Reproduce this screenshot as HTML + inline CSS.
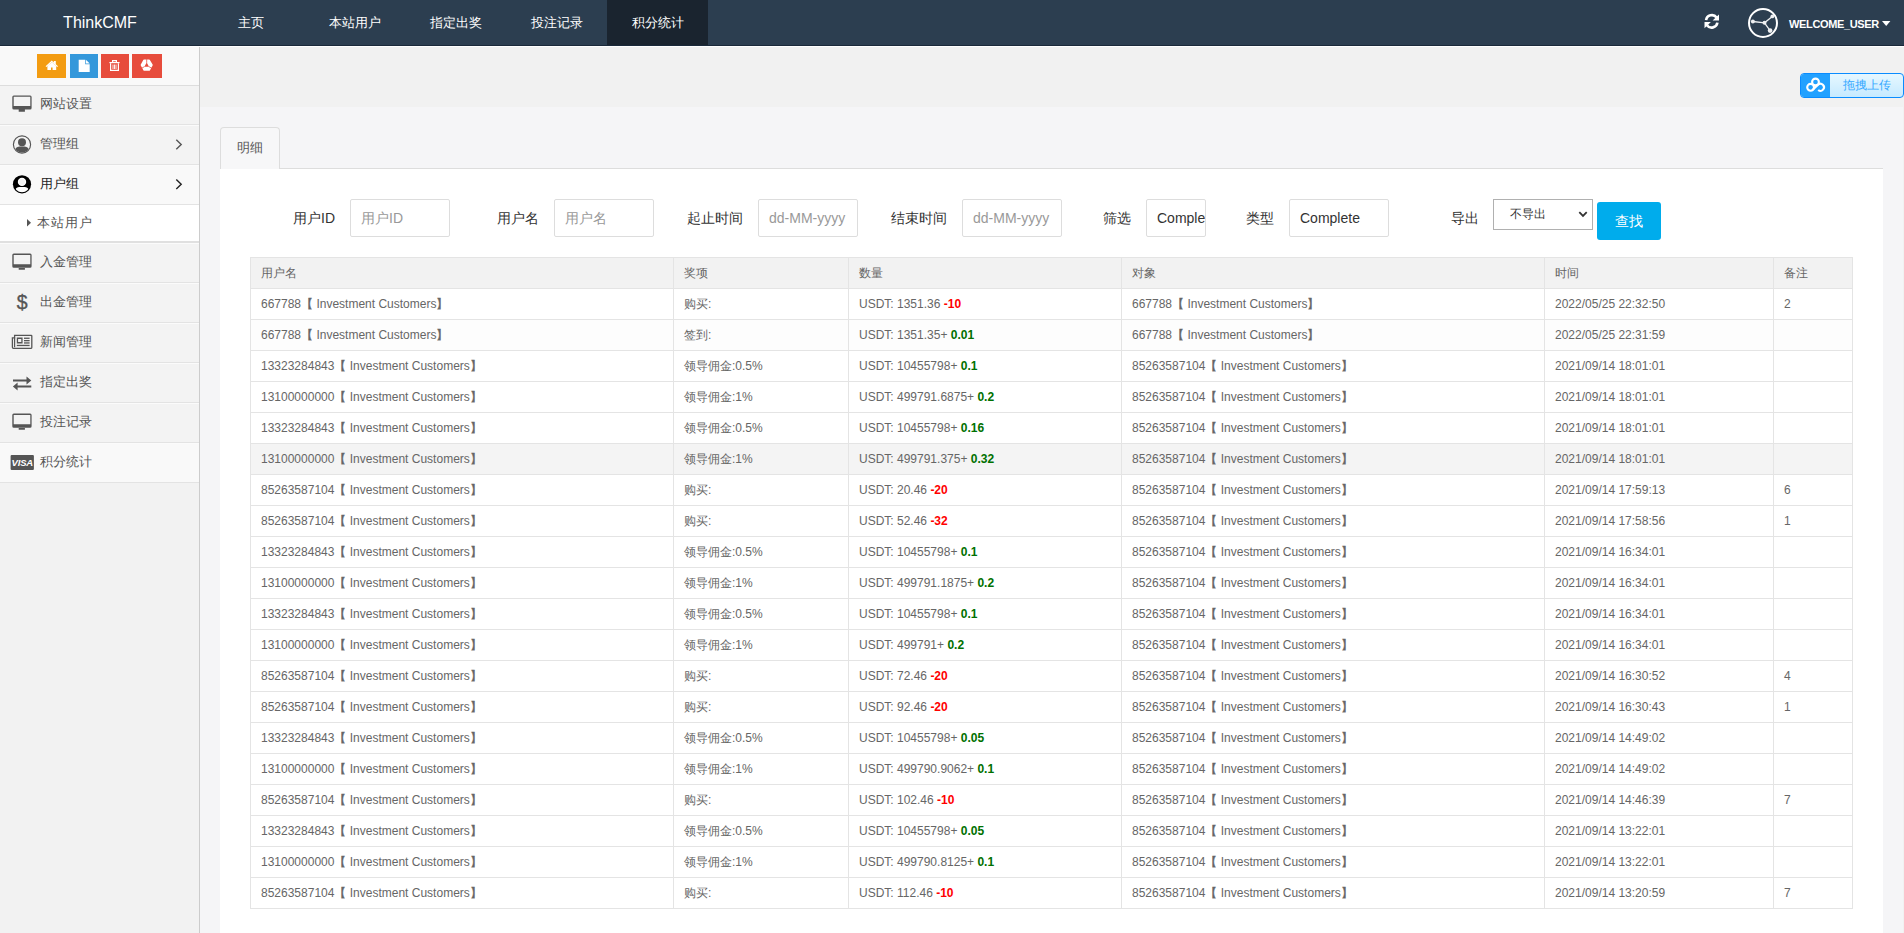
<!DOCTYPE html>
<html><head><meta charset="utf-8">
<style>
*{margin:0;padding:0;box-sizing:border-box}
html,body{width:1904px;height:933px;overflow:hidden}
body{font-family:"Liberation Sans",sans-serif;font-size:12px;color:#666;background:#f5f5f7;position:relative}
.abs{position:absolute}
#nav{left:0;top:0;width:1904px;height:46px;background:#2c3e50}
#navb{left:0;top:45px;width:1904px;height:1px;background:rgba(5,15,30,0.45)}
#nav .brand{left:0;top:0;width:200px;height:45px;line-height:45px;text-align:center;color:#fff;font-size:16px}
#nav .item{top:0;height:45px;line-height:45px;color:#fff;font-size:13px;text-align:center;font-weight:500}
#nav .active{background:#1a242f}
#line46{left:0;top:46px;width:1904px;height:1px;background:#fff}
#side{left:0;top:47px;width:200px;height:886px;background:#f2f2f2;border-right:1px solid #ccc}
.shortcuts{left:0;top:0;width:199px;height:39px;background:#f9f9f9;border-bottom:1px solid #ddd}
.sc{top:7px;height:24px}
.sc svg{position:absolute;left:0;top:0}
.mi{left:0;width:199px;height:40px;background:#f3f3f3;border-top:1px solid #fbfbfb;border-bottom:1px solid #e3e3e3;color:#555;font-size:13px}
.mi .t{position:absolute;left:40px;top:-1.5px;line-height:38px;white-space:nowrap}
.mi svg{position:absolute}
.mi.act{background:#f9f9f9}
.mi .chev{position:absolute;left:175px;top:14px}
#main{left:200px;top:47px;width:1704px;height:886px;background:#f5f5f7}
#topgray{left:0;top:0;width:1704px;height:60px;background:#f1f1f1}
#upload{left:1600px;top:26px;width:104px;height:25px;border:1px solid #0a8cff;border-radius:4px;overflow:hidden;background:linear-gradient(#e6f7ff,#c6eaff)}
#upload .ic{position:absolute;left:0;top:0;width:29px;height:23px;background:#22a1ff}
#upload .tx{position:absolute;left:42px;top:0;line-height:23px;color:#36a9ff;font-size:12px;white-space:nowrap}
#tab{left:20px;top:80px;width:60px;height:42px;border:1px solid #ddd;border-bottom:none;border-radius:4px 4px 0 0;background:#f7f7f8;font-size:13px;color:#555;line-height:40px;text-align:center}
#tabline{left:80px;top:121px;width:1603px;height:1px;background:#ddd}
#panel{left:20px;top:122px;width:1663px;height:770px;background:#fff}
.lab{top:0;font-size:14px;color:#333;white-space:nowrap}
.inp{height:38px;border:1px solid #ddd;border-radius:2px;font-size:14px;color:#999;padding-left:10px;line-height:36px;white-space:nowrap;overflow:hidden;background:#fff}
.inp.v{color:#333}
#sel{border:1px solid #b0b0b0;height:31px;width:100px;background:#fff;font-size:12px;color:#333}
#btn{background:#00acec;border-radius:3px;color:#fff;font-size:14px;text-align:center;line-height:38px}
table{position:absolute;left:30px;top:88px;border-collapse:collapse;table-layout:fixed;width:1602px;font-size:12px;color:#666}
td,th{border:1px solid #e4e4e4;height:31px;padding:0 10px;text-align:left;font-weight:normal;white-space:nowrap;overflow:hidden}
th{background:#f2f2f2;color:#666}
tr.hv td{background:#f4f4f4}
b.r{color:#f00}
b.g{color:#007000}
.bk{-webkit-text-stroke:0.35px #666}
</style></head><body>
<div id="nav" class="abs">
  <div class="brand abs">ThinkCMF</div>
  <div class="item abs" style="left:212px;width:77px">主页</div>
  <div class="item abs" style="left:304px;width:101px">本站用户</div>
  <div class="item abs" style="left:405px;width:101px">指定出奖</div>
  <div class="item abs" style="left:506px;width:101px">投注记录</div>
  <div class="item abs active" style="left:607px;width:101px">积分统计</div>
</div>
<div id="navb" class="abs"></div>
<div id="line46" class="abs"></div>
<div id="side" class="abs">
  <div class="shortcuts abs">
    <div class="sc abs" style="left:37px;width:29px;background:#f39c12"></div>
    <div class="sc abs" style="left:70px;width:28px;background:#3498db"></div>
    <div class="sc abs" style="left:101px;width:28px;background:#e74c3c"></div>
    <div class="sc abs" style="left:132px;width:30px;background:#e74c3c"></div>
  </div>
  <div class="mi abs" style="top:39px;border-top:none;height:39px"><span class="t">网站设置</span></div>
  <div class="mi abs" style="top:78px"><span class="t">管理组</span></div>
  <div class="mi abs act" style="top:118px;color:#222"><span class="t">用户组</span></div>
  <div class="abs" style="left:0;top:158px;width:199px;height:38px;background:#fff;border-bottom:2px solid #e0e0e0"><span class="abs" style="left:37px;top:0;line-height:36px;font-size:13px;color:#555;letter-spacing:1px">本站用户</span></div>
  <div class="mi abs" style="top:196px"><span class="t">入金管理</span></div>
  <div class="mi abs" style="top:236px"><span class="t">出金管理</span></div>
  <div class="mi abs" style="top:276px"><span class="t">新闻管理</span></div>
  <div class="mi abs" style="top:316px"><span class="t">指定出奖</span></div>
  <div class="mi abs" style="top:356px"><span class="t">投注记录</span></div>
  <div class="mi abs act" style="top:396px"><span class="t">积分统计</span></div>
</div>
<div id="main" class="abs">
  <div id="topgray" class="abs"></div>
  <div class="abs" style="left:1703px;top:60px;width:1px;height:826px;background:#f1f1f1"></div>
  <div id="upload" class="abs"><div class="ic"></div><span class="tx">拖拽上传</span></div>
  <div id="tab" class="abs">明细</div>
  <div id="tabline" class="abs"></div>
  <div id="panel" class="abs">
    <span class="lab abs" style="left:73px;top:39px;line-height:20px">用户ID</span>
    <div class="inp abs" style="left:130px;top:30px;width:100px">用户ID</div>
    <span class="lab abs" style="left:277px;top:39px;line-height:20px">用户名</span>
    <div class="inp abs" style="left:334px;top:30px;width:100px">用户名</div>
    <span class="lab abs" style="left:467px;top:39px;line-height:20px">起止时间</span>
    <div class="inp abs" style="left:538px;top:30px;width:100px">dd-MM-yyyy</div>
    <span class="lab abs" style="left:671px;top:39px;line-height:20px">结束时间</span>
    <div class="inp abs" style="left:742px;top:30px;width:100px">dd-MM-yyyy</div>
    <span class="lab abs" style="left:883px;top:39px;line-height:20px">筛选</span>
    <div class="inp abs v" style="left:926px;top:30px;width:60px">Complete</div>
    <span class="lab abs" style="left:1026px;top:39px;line-height:20px">类型</span>
    <div class="inp abs v" style="left:1069px;top:30px;width:100px">Complete</div>
    <span class="lab abs" style="left:1231px;top:39px;line-height:20px">导出</span>
    <div id="sel" class="abs" style="left:1273px;top:30px"></div>
    <div id="btn" class="abs" style="left:1377px;top:33px;width:64px;height:38px">查找</div>
    <table>
      <colgroup><col style="width:423px"><col style="width:175px"><col style="width:273px"><col style="width:423px"><col style="width:229px"><col style="width:79px"></colgroup>
      <tr><th>用户名</th><th>奖项</th><th>数量</th><th>对象</th><th>时间</th><th>备注</th></tr>
<tr><td>667788<span class="bk">【</span> Investment Customers<span class="bk">】</span></td><td>购买:</td><td>USDT: 1351.36 <b class="r">-10</b></td><td>667788<span class="bk">【</span> Investment Customers<span class="bk">】</span></td><td>2022/05/25 22:32:50</td><td>2</td></tr>
<tr style="background:#fdfdfd"><td>667788<span class="bk">【</span> Investment Customers<span class="bk">】</span></td><td>签到:</td><td>USDT: 1351.35+ <b class="g">0.01</b></td><td>667788<span class="bk">【</span> Investment Customers<span class="bk">】</span></td><td>2022/05/25 22:31:59</td><td></td></tr>
<tr><td>13323284843<span class="bk">【</span> Investment Customers<span class="bk">】</span></td><td>领导佣金:0.5%</td><td>USDT: 10455798+ <b class="g">0.1</b></td><td>85263587104<span class="bk">【</span> Investment Customers<span class="bk">】</span></td><td>2021/09/14 18:01:01</td><td></td></tr>
<tr><td>13100000000<span class="bk">【</span> Investment Customers<span class="bk">】</span></td><td>领导佣金:1%</td><td>USDT: 499791.6875+ <b class="g">0.2</b></td><td>85263587104<span class="bk">【</span> Investment Customers<span class="bk">】</span></td><td>2021/09/14 18:01:01</td><td></td></tr>
<tr><td>13323284843<span class="bk">【</span> Investment Customers<span class="bk">】</span></td><td>领导佣金:0.5%</td><td>USDT: 10455798+ <b class="g">0.16</b></td><td>85263587104<span class="bk">【</span> Investment Customers<span class="bk">】</span></td><td>2021/09/14 18:01:01</td><td></td></tr>
<tr class="hv"><td>13100000000<span class="bk">【</span> Investment Customers<span class="bk">】</span></td><td>领导佣金:1%</td><td>USDT: 499791.375+ <b class="g">0.32</b></td><td>85263587104<span class="bk">【</span> Investment Customers<span class="bk">】</span></td><td>2021/09/14 18:01:01</td><td></td></tr>
<tr><td>85263587104<span class="bk">【</span> Investment Customers<span class="bk">】</span></td><td>购买:</td><td>USDT: 20.46 <b class="r">-20</b></td><td>85263587104<span class="bk">【</span> Investment Customers<span class="bk">】</span></td><td>2021/09/14 17:59:13</td><td>6</td></tr>
<tr><td>85263587104<span class="bk">【</span> Investment Customers<span class="bk">】</span></td><td>购买:</td><td>USDT: 52.46 <b class="r">-32</b></td><td>85263587104<span class="bk">【</span> Investment Customers<span class="bk">】</span></td><td>2021/09/14 17:58:56</td><td>1</td></tr>
<tr><td>13323284843<span class="bk">【</span> Investment Customers<span class="bk">】</span></td><td>领导佣金:0.5%</td><td>USDT: 10455798+ <b class="g">0.1</b></td><td>85263587104<span class="bk">【</span> Investment Customers<span class="bk">】</span></td><td>2021/09/14 16:34:01</td><td></td></tr>
<tr><td>13100000000<span class="bk">【</span> Investment Customers<span class="bk">】</span></td><td>领导佣金:1%</td><td>USDT: 499791.1875+ <b class="g">0.2</b></td><td>85263587104<span class="bk">【</span> Investment Customers<span class="bk">】</span></td><td>2021/09/14 16:34:01</td><td></td></tr>
<tr><td>13323284843<span class="bk">【</span> Investment Customers<span class="bk">】</span></td><td>领导佣金:0.5%</td><td>USDT: 10455798+ <b class="g">0.1</b></td><td>85263587104<span class="bk">【</span> Investment Customers<span class="bk">】</span></td><td>2021/09/14 16:34:01</td><td></td></tr>
<tr><td>13100000000<span class="bk">【</span> Investment Customers<span class="bk">】</span></td><td>领导佣金:1%</td><td>USDT: 499791+ <b class="g">0.2</b></td><td>85263587104<span class="bk">【</span> Investment Customers<span class="bk">】</span></td><td>2021/09/14 16:34:01</td><td></td></tr>
<tr><td>85263587104<span class="bk">【</span> Investment Customers<span class="bk">】</span></td><td>购买:</td><td>USDT: 72.46 <b class="r">-20</b></td><td>85263587104<span class="bk">【</span> Investment Customers<span class="bk">】</span></td><td>2021/09/14 16:30:52</td><td>4</td></tr>
<tr><td>85263587104<span class="bk">【</span> Investment Customers<span class="bk">】</span></td><td>购买:</td><td>USDT: 92.46 <b class="r">-20</b></td><td>85263587104<span class="bk">【</span> Investment Customers<span class="bk">】</span></td><td>2021/09/14 16:30:43</td><td>1</td></tr>
<tr><td>13323284843<span class="bk">【</span> Investment Customers<span class="bk">】</span></td><td>领导佣金:0.5%</td><td>USDT: 10455798+ <b class="g">0.05</b></td><td>85263587104<span class="bk">【</span> Investment Customers<span class="bk">】</span></td><td>2021/09/14 14:49:02</td><td></td></tr>
<tr><td>13100000000<span class="bk">【</span> Investment Customers<span class="bk">】</span></td><td>领导佣金:1%</td><td>USDT: 499790.9062+ <b class="g">0.1</b></td><td>85263587104<span class="bk">【</span> Investment Customers<span class="bk">】</span></td><td>2021/09/14 14:49:02</td><td></td></tr>
<tr><td>85263587104<span class="bk">【</span> Investment Customers<span class="bk">】</span></td><td>购买:</td><td>USDT: 102.46 <b class="r">-10</b></td><td>85263587104<span class="bk">【</span> Investment Customers<span class="bk">】</span></td><td>2021/09/14 14:46:39</td><td>7</td></tr>
<tr><td>13323284843<span class="bk">【</span> Investment Customers<span class="bk">】</span></td><td>领导佣金:0.5%</td><td>USDT: 10455798+ <b class="g">0.05</b></td><td>85263587104<span class="bk">【</span> Investment Customers<span class="bk">】</span></td><td>2021/09/14 13:22:01</td><td></td></tr>
<tr><td>13100000000<span class="bk">【</span> Investment Customers<span class="bk">】</span></td><td>领导佣金:1%</td><td>USDT: 499790.8125+ <b class="g">0.1</b></td><td>85263587104<span class="bk">【</span> Investment Customers<span class="bk">】</span></td><td>2021/09/14 13:22:01</td><td></td></tr>
<tr><td>85263587104<span class="bk">【</span> Investment Customers<span class="bk">】</span></td><td>购买:</td><td>USDT: 112.46 <b class="r">-10</b></td><td>85263587104<span class="bk">【</span> Investment Customers<span class="bk">】</span></td><td>2021/09/14 13:20:59</td><td>7</td></tr>    </table>
  </div>
</div>
<span class="abs" style="left:1789px;top:17px;color:#fff;font-size:11px;font-weight:bold;line-height:14px;letter-spacing:-0.35px;white-space:nowrap">WELCOME_USER</span>
<span class="abs" style="left:1510px;top:207px;color:#333;font-size:12px;line-height:14px;white-space:nowrap">不导出</span>
<svg class="abs" style="left:0;top:0;pointer-events:none" width="1904" height="933" viewBox="0 0 1904 933">
<!-- shortcuts -->
<g fill="#fff">
  <path d="M45.6,66.2 L51.8,60.6 L53.8,62.4 V61 H55.8 V64.2 L58,66.2 L57.2,67 L51.8,62.2 L46.4,67 Z"/>
  <path d="M47.4,66 L51.8,62.2 L56.2,66 V70 H52.6 V67.6 H51 V70 H47.4 Z"/>
  <path d="M78.7,59.8 H85.2 V64.3 H89.7 V71.9 H78.7 Z"/>
  <path d="M85.9,59.8 L89.7,63.6 H85.9 Z"/>
</g>
<g fill="none" stroke="#fff" stroke-width="1.2">
  <path d="M110.6,63.2 V70.3 H118.4 V63.2"/>
  <path d="M109.4,62.6 H119.6"/>
  <path d="M112.6,62.4 V60.6 H116.4 V62.4"/>
  <path d="M113,64.5 V69 M114.5,64.5 V69 M116,64.5 V69" stroke-width="0.9"/>
</g>
<g>
  <path d="M143.4,59.8 Q143.8,59.5 144.2,59.5 H149.2 Q149.6,59.5 149.9,59.9 L152.6,64.6 Q152.9,65.1 152.6,65.6 L150,70.2 Q149.7,70.7 149.2,70.7 H144.2 Q143.7,70.7 143.4,70.2 L140.8,65.6 Q140.5,65.1 140.8,64.6 Z" fill="#fff"/>
  <path d="M146.7,62.6 L149,66.7 H144.4 Z" fill="#e74c3c"/>
  <path d="M146.7,59.2 V62.8 M141,68.6 L144.5,66.6 M152.4,68.6 L148.9,66.6" stroke="#e74c3c" stroke-width="0.75"/>
</g>
<!-- menu icons -->
<g fill="#555" fill-rule="evenodd">
  <path d="M13.8,95.5 H30.1 Q31.6,95.5 31.6,97 V108.1 Q31.6,109.6 30.1,109.6 H13.8 Q12.3,109.6 12.3,108.1 V97 Q12.3,95.5 13.8,95.5 Z M13.7,96.8 V106.1 H30.3 V96.8 Z M18.7,109.5 H24.9 V111.7 H18.7 Z"/>
  <path d="M13.8,253.6 H30.1 Q31.6,253.6 31.6,255.1 V266.2 Q31.6,267.7 30.1,267.7 H13.8 Q12.3,267.7 12.3,266.2 V255.1 Q12.3,253.6 13.8,253.6 Z M13.7,254.9 V264.2 H30.3 V254.9 Z M18.7,267.6 H24.9 V269.8 H18.7 Z"/>
  <path d="M13.8,413.6 H30.1 Q31.6,413.6 31.6,415.1 V426.2 Q31.6,427.7 30.1,427.7 H13.8 Q12.3,427.7 12.3,426.2 V415.1 Q12.3,413.6 13.8,413.6 Z M13.7,414.9 V424.2 H30.3 V414.9 Z M18.7,427.6 H24.9 V429.8 H18.7 Z"/>
</g>
<!-- user circle gray -->
<defs><clipPath id="cp1"><circle cx="22" cy="144.5" r="8"/></clipPath><clipPath id="cp2"><circle cx="22" cy="184.3" r="7.9"/></clipPath></defs>
<circle cx="22" cy="144.5" r="8.6" fill="none" stroke="#555" stroke-width="1.15"/>
<circle cx="22" cy="142.2" r="4" fill="#555"/>
<path d="M14,156 Q14,146.6 19.5,146.6 H24.5 Q30,146.6 30,156 Z" fill="#555" clip-path="url(#cp1)"/>
<!-- user circle black -->
<circle cx="22" cy="184.3" r="9.1" fill="#000"/>
<circle cx="22" cy="181.9" r="4.2" fill="#fff"/>
<circle cx="22" cy="181.9" r="2.9" fill="#f3f3f3"/>
<path d="M14,196 Q14.3,186.9 19,186.9 H25 Q29.7,186.9 30,196 Z" fill="#fff" clip-path="url(#cp2)"/>
<!-- chevrons -->
<path d="M176.3,139.8 L181.2,144.5 L176.3,149.2" fill="none" stroke="#555" stroke-width="1.4"/>
<path d="M176.3,179.6 L181.2,184.3 L176.3,189" fill="none" stroke="#222" stroke-width="1.4"/>
<path d="M27,219 L31,222.7 L27,226.4 Z" fill="#555"/>
<!-- dollar -->
<text x="22.3" y="308.8" font-family="Liberation Sans" font-size="19.5" fill="#555" stroke="#555" stroke-width="0.35" text-anchor="middle">$</text>
<!-- newspaper -->
<g fill="none" stroke="#555">
  <path d="M14.6,335.4 H31.2 Q31.8,335.4 31.8,336 V347.6 Q31.8,348.3 31.2,348.3 H13.4 Q12.4,348.3 12.4,347.3 V337.8 H14.6 Z" stroke-width="1.3"/>
  <path d="M14.6,337.8 V347.3" stroke-width="1.2"/>
</g>
<g fill="#555">
  <path d="M16.8,337.6 H22.6 V343.4 H16.8 Z M18.1,338.9 V342.1 H21.3 V338.9 Z" fill-rule="evenodd"/>
  <rect x="24" y="337.6" width="5.6" height="1.3"/>
  <rect x="24" y="340" width="5.6" height="1.3"/>
  <rect x="24" y="342.3" width="5.6" height="1.3"/>
  <rect x="16.8" y="344.8" width="12.8" height="1.3"/>
</g>
<!-- exchange -->
<g fill="#555">
  <path d="M13,379.6 H26.5 V376.4 L31.3,380.6 L26.5,384.6 V381.6 H13 Z"/>
  <path d="M31.3,385.4 H17.6 V382.4 L12.9,386.4 L17.6,390.4 V387.4 H31.3 Z"/>
</g>
<!-- visa -->
<rect x="10.6" y="454.9" width="23.3" height="15" rx="1" fill="#555"/>
<text x="22.3" y="466.1" font-family="Liberation Sans" font-size="9.5" font-weight="bold" font-style="italic" fill="#fff" text-anchor="middle" letter-spacing="-0.2">VISA</text>
<!-- nav right -->
<g fill="none" stroke="#fff" stroke-width="2.6">
  <path d="M1706.1,20.2 A5.8,5.8 0 0 1 1716.6,17.6"/>
  <path d="M1717.4,22.6 A5.8,5.8 0 0 1 1707,25.2"/>
</g>
<g fill="#fff">
  <path d="M1712.6,20.5 H1719 V14.4 Z"/>
  <path d="M1710.9,22.1 H1704.5 V28.3 Z"/>
</g>
<circle cx="1763" cy="23" r="14" fill="none" stroke="#fff" stroke-width="2"/>
<g stroke="#fff" stroke-width="1.3" fill="#fff" opacity="0.92">
  <path d="M1752.9,21.5 L1764.5,22.8 L1772.3,16.4 M1764.5,22.8 L1770.1,30.6" fill="none"/>
  <circle cx="1752.9" cy="21.5" r="2" stroke="none"/>
  <circle cx="1764.5" cy="22.8" r="2" stroke="none"/>
  <circle cx="1772.3" cy="16.4" r="1.9" stroke="none"/>
  <circle cx="1770.1" cy="30.6" r="2.3" stroke="none"/>
</g>
<path d="M1882,21.1 H1890.4 L1886.2,25.9 Z" fill="#fff"/>
<!-- upload cloud -->
<g fill="none" stroke="#fff" stroke-width="2.1">
  <circle cx="1815.5" cy="82" r="3.4"/>
  <circle cx="1810.6" cy="87.3" r="3.4"/>
  <path d="M1818.2,90 A3.5,3.5 0 1 0 1818,84.8 L1812.8,89.8"/>
</g>
<!-- select chevron -->
<path d="M1579.3,212.2 L1583,215.9 L1586.7,212.2" fill="none" stroke="#333" stroke-width="1.8"/>
</svg>
</body></html>
